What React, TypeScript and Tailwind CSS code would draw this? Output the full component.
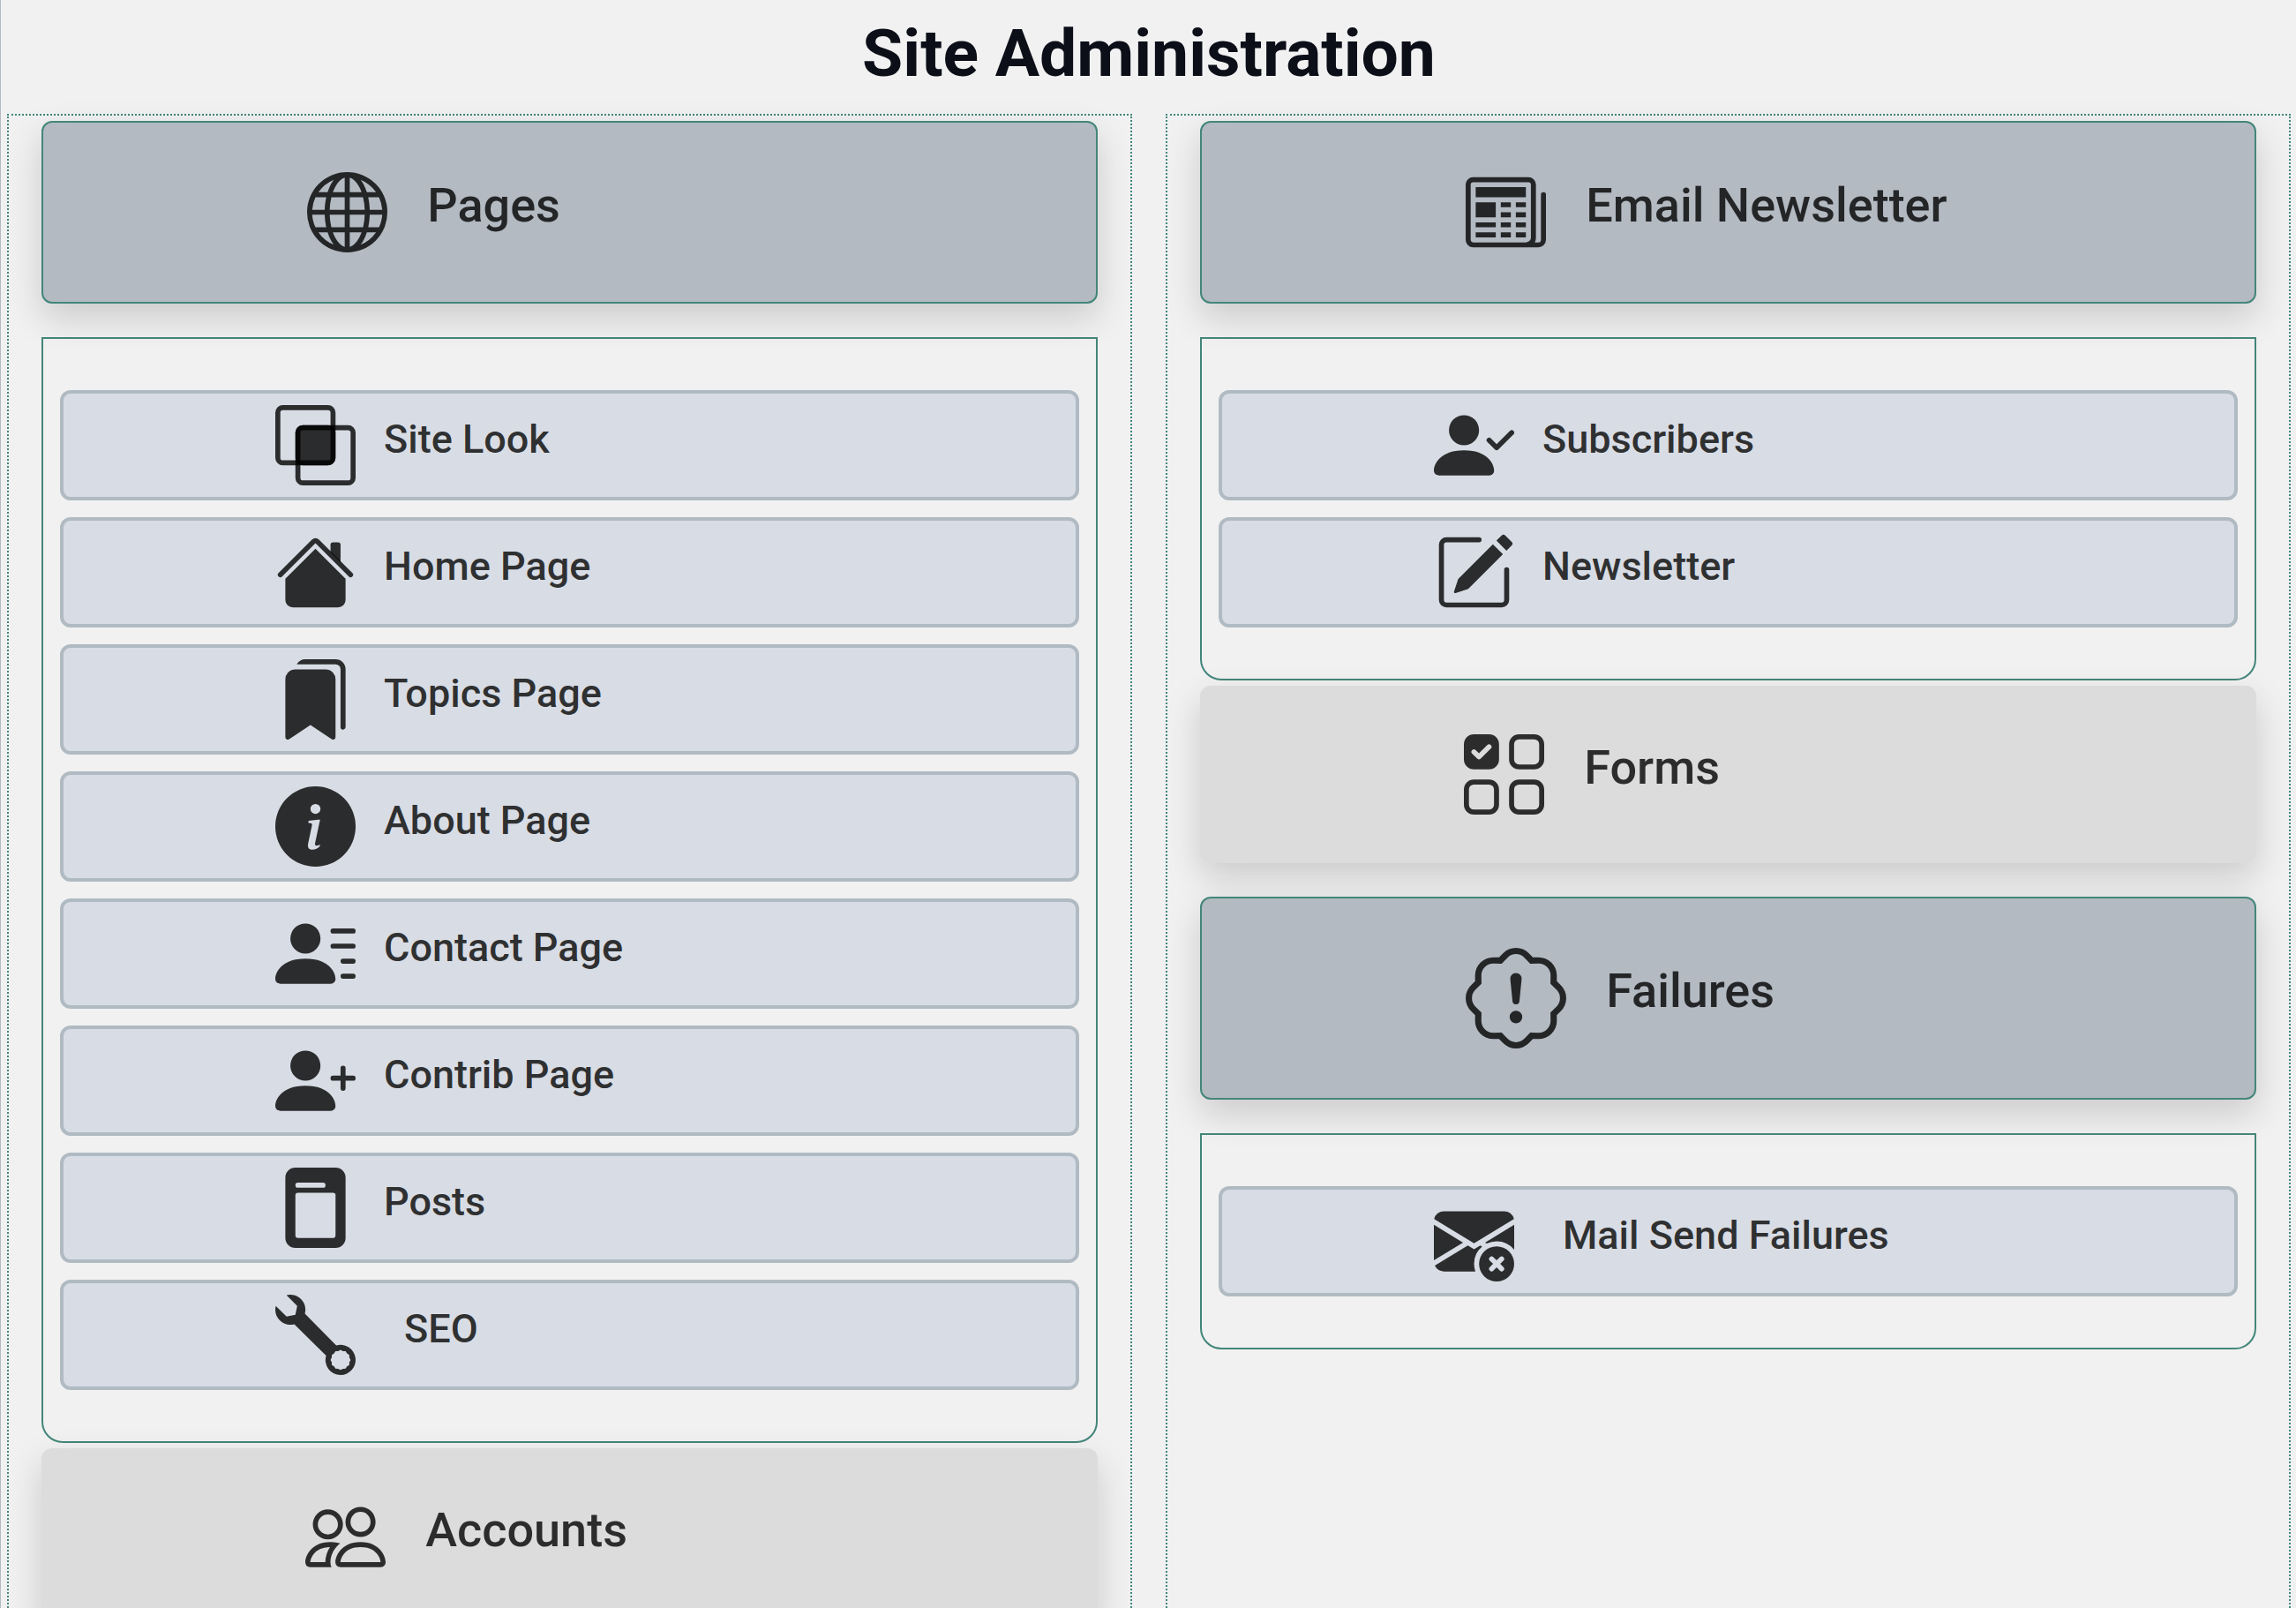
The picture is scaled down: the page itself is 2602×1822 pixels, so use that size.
import type { ReactNode } from "react";
import type { IconType } from "react-icons";
import {
  BsBookmarksFill,
  BsEnvelopeXFill,
  BsFilePostFill,
  BsGlobe,
  BsInfoCircleFill,
  BsNewspaper,
  BsPatchExclamation,
  BsPencilSquare,
  BsPeople,
  BsPersonCheckFill,
  BsPersonLinesFill,
  BsPersonPlusFill,
  BsUiChecksGrid,
  BsWrench,
} from "react-icons/bs";

type IconProps = { className?: string; "aria-hidden"?: boolean };

/* Two overlapping squares with a filled intersection. */
function IntersectIcon({ className }: IconProps) {
  return (
    <svg viewBox="0 0 16 16" fill="currentColor" className={className} aria-hidden>
      <rect x="0.5" y="0.5" width="11" height="11" rx="1" fill="none" stroke="currentColor" />
      <rect x="4.5" y="4.5" width="11" height="11" rx="1" fill="none" stroke="currentColor" />
      <rect x="4" y="4" width="8" height="8" rx="1.5" />
    </svg>
  );
}

function HouseIcon({ className }: IconProps) {
  return (
    <svg viewBox="0 0 16 16" fill="currentColor" className={className} aria-hidden>
      <path d="M8 3.293l6 6V13.5a1.5 1.5 0 0 1-1.5 1.5h-9A1.5 1.5 0 0 1 2 13.5V9.293l6-6z" />
      <path d="M13 2.5V6l-2-2V2.5a.5.5 0 0 1 .5-.5h1a.5.5 0 0 1 .5.5z" />
      <path d="M7.293 1.5a1 1 0 0 1 1.414 0l6.647 6.646a.5.5 0 0 1-.708.708L8 2.207 1.354 8.854a.5.5 0 1 1-.708-.708L7.293 1.5z" />
    </svg>
  );
}

type Icon = IconType | ((props: IconProps) => ReactNode);

function SectionHeader({
  icon: Glyph,
  label,
  open = false,
  large = false,
}: {
  icon: Icon;
  label: string;
  open?: boolean;
  large?: boolean;
}) {
  return (
    <h2>
      <button
        type="button"
        aria-expanded={open}
        className={
          "flex w-full items-center gap-[45px] rounded-xl pl-[25%] text-left shadow-[0_16px_40px_rgba(0,0,0,0.16)] " +
          (open ? "border-2 border-[#43867a] bg-[#b3bac2] py-14" : "bg-[#dcdcdc] py-[55px]")
        }
      >
        <Glyph className={large ? "size-[114px] shrink-0" : "size-[91px] shrink-0"} aria-hidden />
        <span className="pb-4 text-[54px] leading-16 font-medium">{label}</span>
      </button>
    </h2>
  );
}

type Item = { icon: Icon; label: string; indent?: boolean };

function SubMenu({ items }: { items: Item[] }) {
  return (
    <ul className="flex flex-col gap-[19px] rounded-b-3xl border-2 border-[#43867a] px-[19px] py-[58px]">
      {items.map(({ icon: Glyph, label, indent }) => (
        <li key={label}>
          <a
            href="#"
            className={
              "flex items-center rounded-xl border-4 border-[#b0bac2] bg-[#d8dce4] py-[13px] pl-60 " +
              (indent ? "gap-[55px]" : "gap-8")
            }
          >
            <Glyph className="size-[91px] shrink-0" aria-hidden />
            <span className="pb-[13px] text-[45px] leading-14 font-medium">{label}</span>
          </a>
        </li>
      ))}
    </ul>
  );
}

const pages: Item[] = [
  { icon: IntersectIcon, label: "Site Look" },
  { icon: HouseIcon, label: "Home Page" },
  { icon: BsBookmarksFill, label: "Topics Page" },
  { icon: BsInfoCircleFill, label: "About Page" },
  { icon: BsPersonLinesFill, label: "Contact Page" },
  { icon: BsPersonPlusFill, label: "Contrib Page" },
  { icon: BsFilePostFill, label: "Posts" },
  { icon: BsWrench, label: "SEO", indent: true },
];

const newsletter: Item[] = [
  { icon: BsPersonCheckFill, label: "Subscribers" },
  { icon: BsPencilSquare, label: "Newsletter" },
];

const failures: Item[] = [{ icon: BsEnvelopeXFill, label: "Mail Send Failures", indent: true }];

function Column({ children }: { children: ReactNode }) {
  return (
    <div className="flex flex-col gap-[38px] border-2 border-dotted border-[#43867a] px-[37px] py-1.5">
      {children}
    </div>
  );
}

export default function App() {
  return (
    <main className="min-h-screen border-l border-[#b3bac2] bg-[#f1f1f1] pr-1.5 pl-[7px] font-['Roboto',sans-serif] text-black/80">
      <h1 className="pt-3 pb-[21px] text-center text-[75px] leading-24 font-bold text-[#0c0e18]">
        Site Administration
      </h1>
      <div className="grid grid-cols-2 gap-[38px]">
        <Column>
          <SectionHeader icon={BsGlobe} label="Pages" open />
          <div className="flex flex-col gap-1.5">
            <SubMenu items={pages} />
            <SectionHeader icon={BsPeople} label="Accounts" />
          </div>
        </Column>
        <Column>
          <SectionHeader icon={BsNewspaper} label="Email Newsletter" open />
          <div className="flex flex-col gap-1.5">
            <SubMenu items={newsletter} />
            <SectionHeader icon={BsUiChecksGrid} label="Forms" />
          </div>
          <SectionHeader icon={BsPatchExclamation} label="Failures" open large />
          <SubMenu items={failures} />
        </Column>
      </div>
    </main>
  );
}
